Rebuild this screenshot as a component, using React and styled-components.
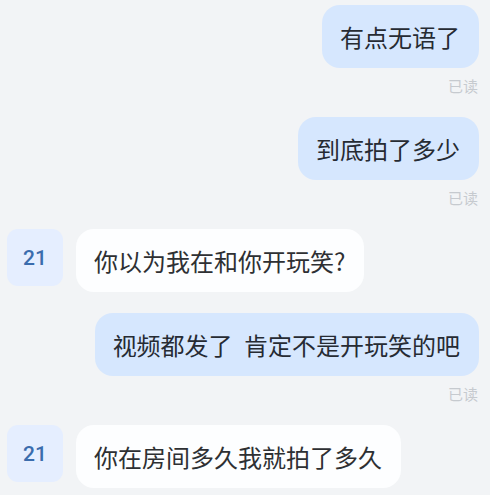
import React from "react";
import styled, { createGlobalStyle } from "styled-components";

const GlobalStyle = createGlobalStyle`
  html, body {
    margin: 0;
    padding: 0;
    background: #f2f4f6;
  }
  body {
    font-family: "Noto Sans CJK SC", "Noto Sans", sans-serif;
  }
`;

const Page = styled("div")`
  width: 490px;
  height: 495px;
  box-sizing: border-box;
  padding: 5px 11px 0 7px;
  display: flex;
  flex-direction: column;
  gap: 21px;
  overflow: hidden;
`;

const Group = styled("div")`
  display: flex;
  flex-direction: column;
  align-items: ${(p) => (p.mine ? "flex-end" : "flex-start")};
`;

const Row = styled("div")`
  display: flex;
  align-items: flex-start;
  gap: 13px;
`;

const Avatar = styled("div")`
  width: 56px;
  height: 57px;
  border-radius: 11px;
  background: #e5eeff;
  display: flex;
  align-items: center;
  justify-content: center;
  color: #3a6cad;
  font-family: "Roboto", "Liberation Sans", sans-serif;
  font-size: 21px;
  font-weight: 500;
  flex-shrink: 0;
`;

const Bubble = styled("div")`
  padding: 16px 19px 16px 18px;
  border-radius: 18px;
  background: ${(p) => (p.mine ? "#d6e7fe" : "#fdfeff")};
  color: ${(p) => (p.mine ? "#262b33" : "#2e3033")};
  font-size: 24px;
  line-height: 31px;
  white-space: nowrap;
  word-spacing: 6px;
`;

const ReadMark = styled("div")`
  margin-top: 8px;
  padding-right: 1px;
  font-size: 15px;
  line-height: 20px;
  color: #c6cacf;
`;

const messages = [
  { mine: true, text: "有点无语了", read: true },
  { mine: true, text: "到底拍了多少", read: true },
  { mine: false, text: "你以为我在和你开玩笑?" },
  { mine: true, text: "视频都发了 肯定不是开玩笑的吧", read: true },
  { mine: false, text: "你在房间多久我就拍了多久" },
];

function Message({ mine, text, read }) {
  if (!mine) {
    return (
      <Group>
        <Row>
          <Avatar>21</Avatar>
          <Bubble>{text}</Bubble>
        </Row>
      </Group>
    );
  }
  return (
    <Group mine>
      <Bubble mine>{text}</Bubble>
      {read && <ReadMark>已读</ReadMark>}
    </Group>
  );
}

export default function App() {
  return (
    <>
      <GlobalStyle />
      <Page>
        {messages.map((m, i) => (
          <Message key={i} {...m} />
        ))}
      </Page>
    </>
  );
}
